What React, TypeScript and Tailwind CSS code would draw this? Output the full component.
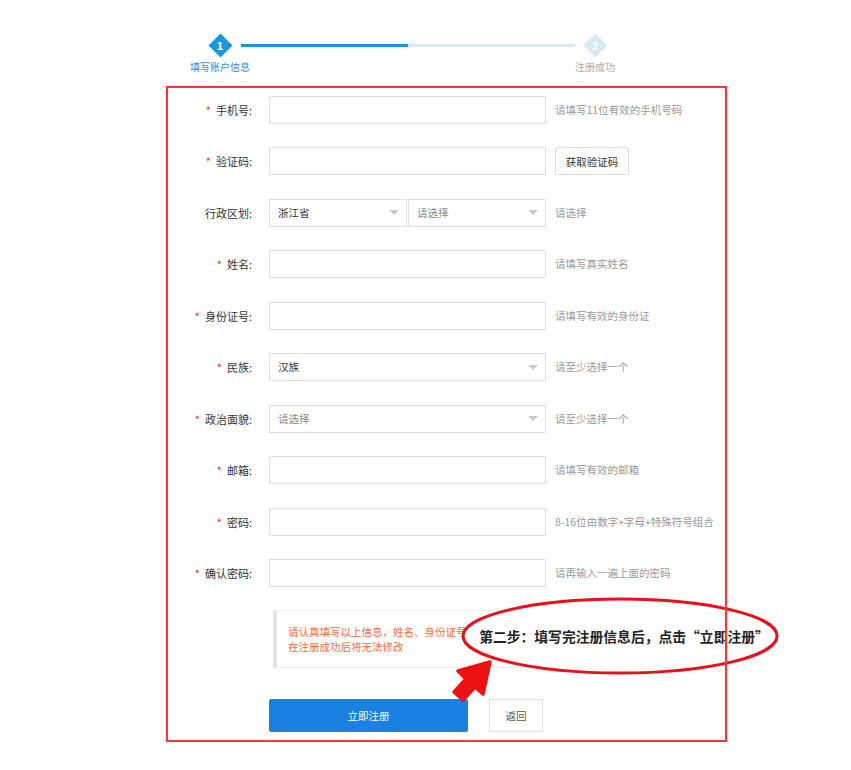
import React from "react";

const font = { fontFamily: '"Microsoft YaHei", "Noto Sans CJK SC", "Liberation Sans", sans-serif' };

interface RowProps {
  label: string;
  required?: boolean;
  help?: string;
  extra?: React.ReactNode;
  children: React.ReactNode;
}

function Row({ label, required, help, extra, children }: RowProps) {
  return (
    <div className="flex items-center h-[28px]">
      <div className="w-[84px] text-right text-[11px] leading-[16px] text-[#333] whitespace-nowrap">
        {required && <span className="text-[#f22] mr-[5px]">*</span>}
        {label}:
      </div>
      <div className="ml-[17px] w-[277px] shrink-0 h-full flex">{children}</div>
      {extra}
      {help && <div className="ml-[9px] text-[10.5px] leading-[14px] text-[#999] whitespace-nowrap">{help}</div>}
    </div>
  );
}

function TextInput() {
  return <div className="w-full h-full border border-[#ddd] bg-white" />;
}

function Select({ value, placeholder, className }: { value?: string; placeholder?: string; className?: string }) {
  return (
    <div className={"h-full border border-[#ddd] bg-white flex items-center justify-between pl-[8px] pr-[7px] " + (className ?? "w-full")}>
      <span className={"text-[10.5px] leading-[16px] " + (value ? "text-[#333]" : "text-[#888]")}>{value ?? placeholder}</span>
      <span className="w-0 h-0 border-l-[5px] border-r-[5px] border-t-[5px] border-l-transparent border-r-transparent border-t-[#c8c8c8]" />
    </div>
  );
}

function Diamond({ n, active }: { n: number; active?: boolean }) {
  return (
    <div className="w-[24px] h-[24px] flex items-center justify-center relative">
      <div className={"w-[17px] h-[17px] rotate-45 " + (active ? "bg-[#1d97dc]" : "bg-[#d8e8f2]")} />
      <span className="absolute inset-0 flex items-center justify-center text-white text-[11px] font-bold leading-none">{n}</span>
    </div>
  );
}

export default function App() {
  return (
    <div className="relative w-[851px] h-[770px] bg-white overflow-hidden" style={font}>
      {/* steps */}
      <div className="pt-[33px]">
        <div className="flex items-center h-[24px]">
          <div className="ml-[208px]">
            <Diamond n={1} active />
          </div>
          <div className="ml-[9px] w-[334px] h-[3px] flex">
            <div className="w-[167px] h-full bg-[#1d97dc]" />
            <div className="flex-1 h-full bg-[#dbe9f3]" />
          </div>
          <div className="ml-[8px]">
            <Diamond n={2} />
          </div>
        </div>
        <div className="flex mt-[3px] text-[10px] leading-[14px]">
          <div className="ml-[180px] w-[80px] text-center text-[#2d8fd5]">填写账户信息</div>
          <div className="ml-[305px] w-[60px] text-center text-[#aaa]">注册成功</div>
        </div>
      </div>

      {/* form frame */}
      <div className="relative ml-[166px] mt-[12px] w-[561px] h-[656px] p-[2px]">
        <div className="pt-[8px] flex flex-col gap-y-[23.44px]">
          <Row label="手机号" required help="请填写11位有效的手机号码">
            <TextInput />
          </Row>
          <Row
            label="验证码"
            required
            extra={
              <div className="ml-[9px] shrink-0 w-[74px] h-full border border-[#ddd] bg-white flex items-center justify-center text-[10.5px] text-[#333] rounded-[2px]">
                获取验证码
              </div>
            }
          >
            <TextInput />
          </Row>
          <Row label="行政区划" help="请选择">
            <Select value="浙江省" className="w-[138px]" />
            <Select placeholder="请选择" className="ml-[1px] w-[138px]" />
          </Row>
          <Row label="姓名" required help="请填写真实姓名">
            <TextInput />
          </Row>
          <Row label="身份证号" required help="请填写有效的身份证">
            <TextInput />
          </Row>
          <Row label="民族" required help="请至少选择一个">
            <Select value="汉族" />
          </Row>
          <Row label="政治面貌" required help="请至少选择一个">
            <Select placeholder="请选择" />
          </Row>
          <Row label="邮箱" required help="请填写有效的邮箱">
            <TextInput />
          </Row>
          <Row label="密码" required help="8-16位由数字+字母+特殊符号组合">
            <TextInput />
          </Row>
          <Row label="确认密码" required help="请再输入一遍上面的密码">
            <TextInput />
          </Row>
        </div>

        <div className="mt-[23px] ml-[105px] w-[290px] h-[58px] border border-[#eee] border-l-[4px] border-l-[#e4e4e4] bg-white pl-[11px] pt-[13px] text-[10.5px] leading-[15px] text-[#fa6a3c]">
          <div className="whitespace-nowrap">请认真填写以上信息，姓名、身份证号</div>
          <div>在注册成功后将无法修改</div>
        </div>

        <div className="mt-[31px] ml-[101px] flex gap-[21px]">
          <div className="w-[199px] h-[33px] bg-[#1a80e2] rounded-[2px] flex items-center justify-center text-white text-[10.5px]">立即注册</div>
          <div className="w-[54px] h-[33px] border border-[#ddd] bg-white flex items-center justify-center text-[#555] text-[10.5px]">返回</div>
        </div>

        {/* callout ellipse */}
        <div className="absolute left-[293px] top-[509px] w-[322px] h-[82px] z-10 flex items-center justify-center">
          <svg className="absolute inset-0" width="322" height="82" viewBox="0 0 322 82">
            <ellipse cx="161" cy="41" rx="157" ry="37" fill="white" stroke="#e8101a" strokeWidth="3" />
          </svg>
          <span className="relative ml-[8px] text-[13.8px] font-bold text-[#222] whitespace-nowrap">第二步：填写完注册信息后，点击“立即注册”</span>
        </div>

        {/* arrow */}
        <svg className="absolute left-[284px] top-[569px] z-10" width="45" height="50" viewBox="0 0 45 50">
          <polygon
            points="40,7 8,16 16,24 4,37 13,45 25,32 33,39"
            fill="#ee1111"
            stroke="#ee1111"
            strokeWidth="3.5"
            strokeLinejoin="round"
          />
        </svg>

        {/* red frame */}
        <div className="absolute inset-0 border-2 border-[#f33] z-20 pointer-events-none" />
      </div>
    </div>
  );
}
